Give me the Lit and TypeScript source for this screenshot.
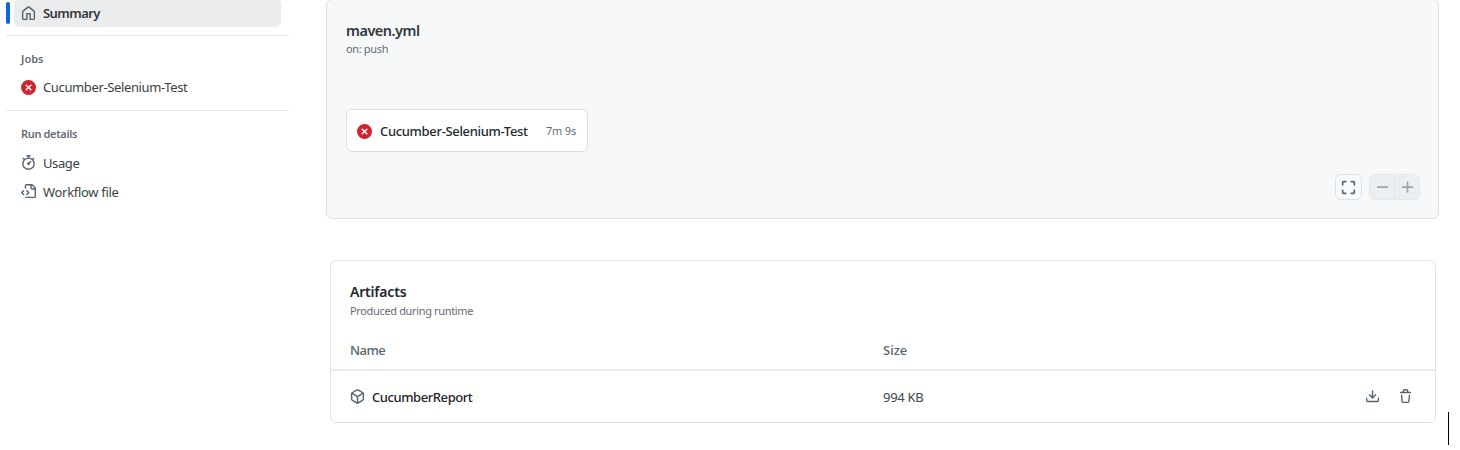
import { LitElement, html, css, svg } from "lit";
import { customElement } from "lit/decorators.js";

const HOME = "M6.906.664a1.749 1.749 0 0 1 2.187 0l5.25 4.2c.415.332.657.835.657 1.367v7.019A1.75 1.75 0 0 1 13.25 15h-3.5a.75.75 0 0 1-.75-.75V9H7v5.25a.75.75 0 0 1-.75.75h-3.5A1.75 1.75 0 0 1 1 13.25V6.23c0-.531.242-1.034.657-1.366l5.25-4.2Zm1.25 1.171a.25.25 0 0 0-.312 0l-5.25 4.2a.25.25 0 0 0-.094.196v7.019c0 .138.112.25.25.25H5.5V8.25a.75.75 0 0 1 .75-.75h3.5a.75.75 0 0 1 .75.75v5.25h2.75a.25.25 0 0 0 .25-.25V6.23a.25.25 0 0 0-.094-.195Z";
const FAILED = "M2.343 13.657A8 8 0 1 1 13.658 2.343 8 8 0 0 1 2.343 13.657ZM6.03 4.97a.751.751 0 0 0-1.042.018.751.751 0 0 0-.018 1.042L6.94 8 4.97 9.97a.749.749 0 0 0 .326 1.275.749.749 0 0 0 .734-.215L8 9.06l1.97 1.97a.749.749 0 0 0 1.275-.326.749.749 0 0 0-.215-.734L9.06 8l1.97-1.97a.749.749 0 0 0-.326-1.275.749.749 0 0 0-.734.215L8 6.94Z";
const STOPWATCH = "M5.75.75A.75.75 0 0 1 6.5 0h3a.75.75 0 0 1 0 1.5h-.75v1l-.001.041a6.724 6.724 0 0 1 3.464 1.435l.007-.006.75-.75a.749.749 0 0 1 1.275.326.749.749 0 0 1-.215.734l-.75.75-.006.007a6.75 6.75 0 1 1-10.548 0L2.72 5.03l-.75-.75a.751.751 0 0 1 .018-1.042.751.751 0 0 1 1.042-.018l.75.75.007.006A6.72 6.72 0 0 1 7.25 2.541V1.5H6.5a.75.75 0 0 1-.75-.75ZM8 14.5a5.25 5.25 0 1 0-.001-10.501A5.25 5.25 0 0 0 8 14.5Zm.389-6.7 1.33-1.33a.75.75 0 1 1 1.061 1.06L9.45 8.861A1.503 1.503 0 0 1 8 10.75a1.499 1.499 0 1 1 .389-2.95Z";
const FILE_CODE = "M4 1.75C4 .784 4.784 0 5.75 0h5.586c.464 0 .909.184 1.237.513l2.914 2.914c.329.328.513.773.513 1.237v8.586A1.75 1.75 0 0 1 14.25 15h-9a.75.75 0 0 1 0-1.5h9a.25.25 0 0 0 .25-.25V6h-2.75A1.75 1.75 0 0 1 10 4.25V1.5H5.75a.25.25 0 0 0-.25.25v2.5a.75.75 0 0 1-1.5 0Zm1.72 4.97a.75.75 0 0 1 1.06 0l2 2a.75.75 0 0 1 0 1.06l-2 2a.749.749 0 0 1-1.275-.326.749.749 0 0 1 .215-.734l1.47-1.47-1.47-1.47a.75.75 0 0 1 0-1.06ZM3.28 7.78 1.81 9.25l1.47 1.47a.751.751 0 0 1-.018 1.042.751.751 0 0 1-1.042.018l-2-2a.75.75 0 0 1 0-1.06l2-2a.751.751 0 0 1 1.042.018.751.751 0 0 1 .018 1.042Zm8.22-6.218V4.25c0 .138.112.25.25.25h2.688l-.011-.013-2.914-2.914-.013-.011Z";
const PACKAGE = "M8.878.392l5.25 3.045c.54.314.872.89.872 1.514v6.098a1.75 1.75 0 0 1-.872 1.514l-5.25 3.045a1.75 1.75 0 0 1-1.756 0l-5.25-3.045A1.75 1.75 0 0 1 1 11.049V4.951c0-.624.332-1.201.872-1.514L7.122.392a1.75 1.75 0 0 1 1.756 0ZM7.875 1.69l-4.63 2.685L8 7.133l4.755-2.758-4.63-2.685a.248.248 0 0 0-.25 0ZM2.5 5.677v5.372c0 .09.047.171.125.216l4.625 2.683V8.432Zm6.25 8.271 4.625-2.683a.25.25 0 0 0 .125-.216V5.677L8.75 8.432Z";
const DOWNLOAD = "M2.75 14A1.75 1.75 0 0 1 1 12.25v-2.5a.75.75 0 0 1 1.5 0v2.5c0 .138.112.25.25.25h10.5a.25.25 0 0 0 .25-.25v-2.5a.75.75 0 0 1 1.5 0v2.5A1.75 1.75 0 0 1 13.25 14Z M7.25 7.689V2a.75.75 0 0 1 1.5 0v5.689l1.97-1.969a.749.749 0 1 1 1.06 1.06l-3.25 3.25a.749.749 0 0 1-1.06 0L4.22 6.78a.749.749 0 1 1 1.06-1.06l1.97 1.969Z";
const TRASH = "M11 1.75V3h2.25a.75.75 0 0 1 0 1.5H2.75a.75.75 0 0 1 0-1.5H5V1.75C5 .784 5.784 0 6.75 0h2.5C10.216 0 11 .784 11 1.75ZM4.496 6.675l.66 6.6a.25.25 0 0 0 .249.225h5.19a.25.25 0 0 0 .249-.225l.66-6.6a.75.75 0 0 1 1.492.149l-.66 6.6A1.748 1.748 0 0 1 10.595 15h-5.19a1.75 1.75 0 0 1-1.741-1.575l-.66-6.6a.75.75 0 1 1 1.492-.15ZM6.5 1.75V3h3V1.75a.25.25 0 0 0-.25-.25h-2.5a.25.25 0 0 0-.25.25Z";

const icon = (d: string, cls = "") =>
  html`<svg class="icon ${cls}" viewBox="0 0 16 16" aria-hidden="true">${svg`<path d=${d}></path>`}</svg>`;

const lineIcon = (d: string) =>
  html`<svg class="icon line" viewBox="0 0 16 16" aria-hidden="true">${svg`<path d=${d}></path>`}</svg>`;

@customElement("app-root")
export class AppRoot extends LitElement {
  static styles = css`
    :host {
      display: block;
      position: relative;
      box-sizing: border-box;
      width: 1460px;
      height: 450px;
      overflow: hidden;
      background: #fff;
      color: #1f2328;
      font-family: "Noto Sans", "Open Sans", sans-serif;
      font-size: 13px;
      line-height: 20px;
      white-space: nowrap;
    }
    * { box-sizing: border-box; }
    .page { display: flex; align-items: flex-start; padding-left: 6px; }
    .icon { width: 15px; height: 15px; fill: #59636e; flex: none; display: block; }
    .icon.failed { fill: #d1242f; }
    .icon.line { fill: none; stroke: currentColor; stroke-width: 1.8; stroke-linecap: round; stroke-linejoin: round; }

    .side { width: 283px; display: flex; flex-direction: column; }
    .current { display: flex; align-items: flex-start; gap: 4px; height: 27px; }
    .marker { width: 4px; height: 22px; margin-top: 2px; border-radius: 3px; background: #0969da; }
    .selected {
      display: flex; align-items: center; gap: 7px;
      width: 267px; height: 27px; padding: 0 0 1px 7px;
      border-radius: 4px 4px 6px 6px; background: #ebecee;
      font-weight: 600; color: #32373c;
    }
    .rule { height: 1px; background: #e3e6eb; }
    .rule.first { margin-top: 8px; }
    .heading { height: 20px; padding-left: 15px; font-size: 11px; font-weight: 600; color: #636c76; }
    .jobs { margin-top: 13px; }
    .details { margin-top: 13px; }
    .item { display: flex; align-items: center; gap: 7px; height: 29px; padding-left: 15px; color: #3a3f45; }
    .job { margin: 4px 0 8px; }
    .job span { margin-top: -1px; }
    .usage { margin-top: 4px; }

    .main { margin-left: 37px; width: 1113px; }
    .graph {
      height: 220px; margin-top: -1px; padding: 20px 18px 18px 19px;
      border: 1px solid #dce0e5; border-radius: 6px; background: #f6f8fa;
      display: flex; flex-direction: column;
    }
    .file { font-size: 14.5px; font-weight: 600; color: #32373c; }
    .sub { font-size: 11px; line-height: 18px; color: #636c76; }
    .node {
      display: flex; align-items: center; width: 242px; height: 43px;
      margin-top: 51px; padding: 1px 11px 0 10px;
      border: 1px solid #d9dee4; border-radius: 6px; background: #fff;
    }
    .node .name { margin-left: 8px; font-weight: 500; color: #24292f; }
    .time { margin-left: auto; font-size: 11px; color: #636c76; letter-spacing: -0.2px; }
    .controls { display: flex; gap: 7px; margin-top: 22px; margin-left: auto; }
    .full, .zoom {
      display: flex; height: 26px; border: 1px solid #dce1e7; border-radius: 6px;
    }
    .full { width: 27px; align-items: center; justify-content: center; color: #59636e; background: #f8fafc; }
    .zoom { width: 51px; background: #ebeff2; border-color: #e4e8ec; color: #9aa2ac; }
    .step { flex: 1; display: flex; align-items: center; justify-content: center; }
    .step + .step { border-left: 1px solid #e1e6ea; }

    .artifacts {
      width: 1106px; height: 163px; margin: 41px 0 0 4px;
      border: 1px solid #dfe3e9; border-radius: 6px;
    }
    .intro { padding: 21px 0 0 19px; }
    .title { font-size: 14px; font-weight: 600; color: #22272c; }
    .row { display: grid; grid-template-columns: 533px 1fr auto; align-items: center; padding: 0 22px 0 19px; }
    .row.head { height: 51px; padding-top: 11px; border-bottom: 2px solid #e9edf2; font-weight: 500; color: #59636e; }
    .row.entry { height: 51px; padding-top: 1px; }
    .artifact { display: flex; align-items: center; gap: 7px; font-weight: 500; color: #1f2328; }
    .size { color: #3f454c; }
    .actions { display: flex; gap: 18px; }
    .artifact .icon, .actions .icon { margin-top: -1px; }
    .caret { position: absolute; left: 1448px; top: 412px; width: 1px; height: 33px; background: #000; }

    .t-summary { letter-spacing: -0.55px; }
    .t-job { letter-spacing: -0.37px; }
    .t-details { letter-spacing: -0.35px; }
    .t-usage { letter-spacing: -0.4px; }
    .t-workflow { letter-spacing: -0.3px; }
    .t-file { letter-spacing: -0.5px; }
    .t-push, .t-produced { letter-spacing: -0.35px; }
    .t-node { letter-spacing: -0.33px; }
    .t-title { letter-spacing: -0.2px; }
    .t-name { letter-spacing: -0.5px; }
    .t-report { letter-spacing: -0.43px; }
    .t-kb { letter-spacing: -0.3px; }
  `;

  render() {
    return html`
      <div class="page">
        <nav class="side">
          <div class="current">
            <span class="marker"></span>
            <div class="selected">${icon(HOME)}<span class="t-summary">Summary</span></div>
          </div>
          <div class="rule first"></div>
          <div class="heading jobs"><span class="t-jobs">Jobs</span></div>
          <div class="item job">${icon(FAILED, "failed")}<span class="t-job">Cucumber-Selenium-Test</span></div>
          <div class="rule"></div>
          <div class="heading details"><span class="t-details">Run details</span></div>
          <div class="item usage">${icon(STOPWATCH)}<span class="t-usage">Usage</span></div>
          <div class="item">${icon(FILE_CODE)}<span class="t-workflow">Workflow file</span></div>
        </nav>
        <main class="main">
          <section class="graph">
            <div class="file"><span class="t-file">maven.yml</span></div>
            <div class="sub"><span class="t-push">on: push</span></div>
            <div class="node">
              ${icon(FAILED, "failed")}
              <span class="name t-node">Cucumber-Selenium-Test</span>
              <span class="time">7m 9s</span>
            </div>
            <div class="controls">
              <div class="full">${lineIcon("M1.8 5V2.8a1 1 0 0 1 1-1H5M11 1.8h2.2a1 1 0 0 1 1 1V5M14.2 11v2.2a1 1 0 0 1-1 1H11M5 14.2H2.8a1 1 0 0 1-1-1V11")}</div>
              <div class="zoom">
                <span class="step">${lineIcon("M2.9 7.6h10.2")}</span>
                <span class="step">${lineIcon("M2.9 7.6h10.2M8 2.5v10.2")}</span>
              </div>
            </div>
          </section>
          <section class="artifacts">
            <div class="intro">
              <div class="title"><span class="t-title">Artifacts</span></div>
              <div class="sub"><span class="t-produced">Produced during runtime</span></div>
            </div>
            <div class="row head"><span><span class="t-name">Name</span></span><span><span class="t-size">Size</span></span></div>
            <div class="row entry">
              <span class="artifact">${icon(PACKAGE)}<span class="t-report">CucumberReport</span></span>
              <span class="size"><span class="t-kb">994 KB</span></span>
              <span class="actions">${icon(DOWNLOAD)}${icon(TRASH)}</span>
            </div>
          </section>
        </main>
      </div>
      <span class="caret"></span>
    `;
  }
}
